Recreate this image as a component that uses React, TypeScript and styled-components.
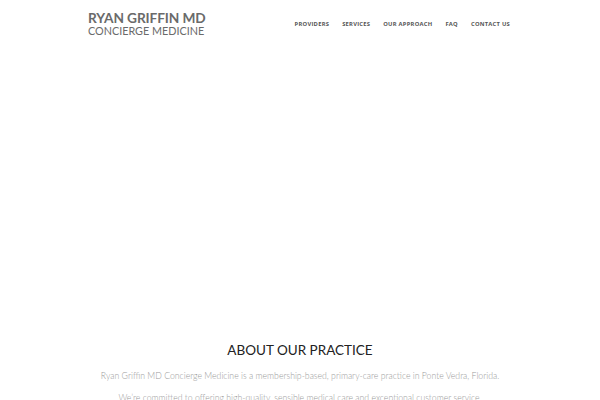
import styled, { createGlobalStyle } from "styled-components";

const GlobalStyle = createGlobalStyle`
  html, body {
    margin: 0;
    padding: 0;
    background: #ffffff;
  }
  body {
    font-family: "Open Sans", "Liberation Sans", sans-serif;
  }
`;

const navItems = ["Providers", "Services", "Our Approach", "FAQ", "Contact Us"];

const App = () => {
  return (
    <>
      <GlobalStyle />
      <Page>
        <Header>
          <Logo>
            <LogoTitle>RYAN GRIFFIN MD</LogoTitle>
            <LogoSub>CONCIERGE MEDICINE</LogoSub>
          </Logo>
          <Nav>
            {navItems.map((item) => (
              <NavLink key={item} href="#">
                {item}
              </NavLink>
            ))}
          </Nav>
        </Header>
        <Hero />
        <About>
          <h2>ABOUT OUR PRACTICE</h2>
          <p>
            Ryan Griffin MD Concierge Medicine is a membership-based, primary-care practice in
            Ponte Vedra, Florida.
          </p>
          <p>
            We’re committed to offering high-quality, sensible medical care and exceptional
            customer service.
          </p>
        </About>
      </Page>
    </>
  );
};

export default App;

const Page = styled.div`
  width: 600px;
  height: 400px;
  overflow: hidden;
  background: #ffffff;
`;

const Header = styled.header`
  display: flex;
  align-items: center;
  justify-content: space-between;
  padding: 11px 90px 0 88px;
  height: 25px;
`;

const Logo = styled.div`
  display: flex;
  flex-direction: column;
  color: #6a6a6a;
  font-family: Lato, "Liberation Sans", sans-serif;
`;

const LogoTitle = styled.span`
  font-size: 13.7px;
  font-weight: 700;
  line-height: 14px;
  letter-spacing: -0.1px;
`;

const LogoSub = styled.span`
  font-size: 10.8px;
  font-weight: 400;
  line-height: 11px;
  letter-spacing: 0;
`;

const Nav = styled.nav`
  display: flex;
  gap: 13px;
`;

const NavLink = styled.a`
  color: #555555;
  font-size: 5.8px;
  font-weight: 700;
  letter-spacing: 0.25px;
  text-transform: uppercase;
  text-decoration: none;
`;

const Hero = styled.div`
  height: 300px;
`;

const About = styled.section`
  text-align: center;
  h2 {
    margin: 5px 0 0;
    color: #222222;
    font-family: Lato, "Liberation Sans", sans-serif;
    font-size: 13.5px;
    font-weight: 400;
    letter-spacing: 0;
    line-height: 18px;
  }
  p {
    margin: 11px 0 0;
    color: #9a9a9a;
    font-family: Lato, "Liberation Sans", sans-serif;
    font-size: 8.7px;
    font-weight: 300;
    line-height: 11px;
  }
`;
